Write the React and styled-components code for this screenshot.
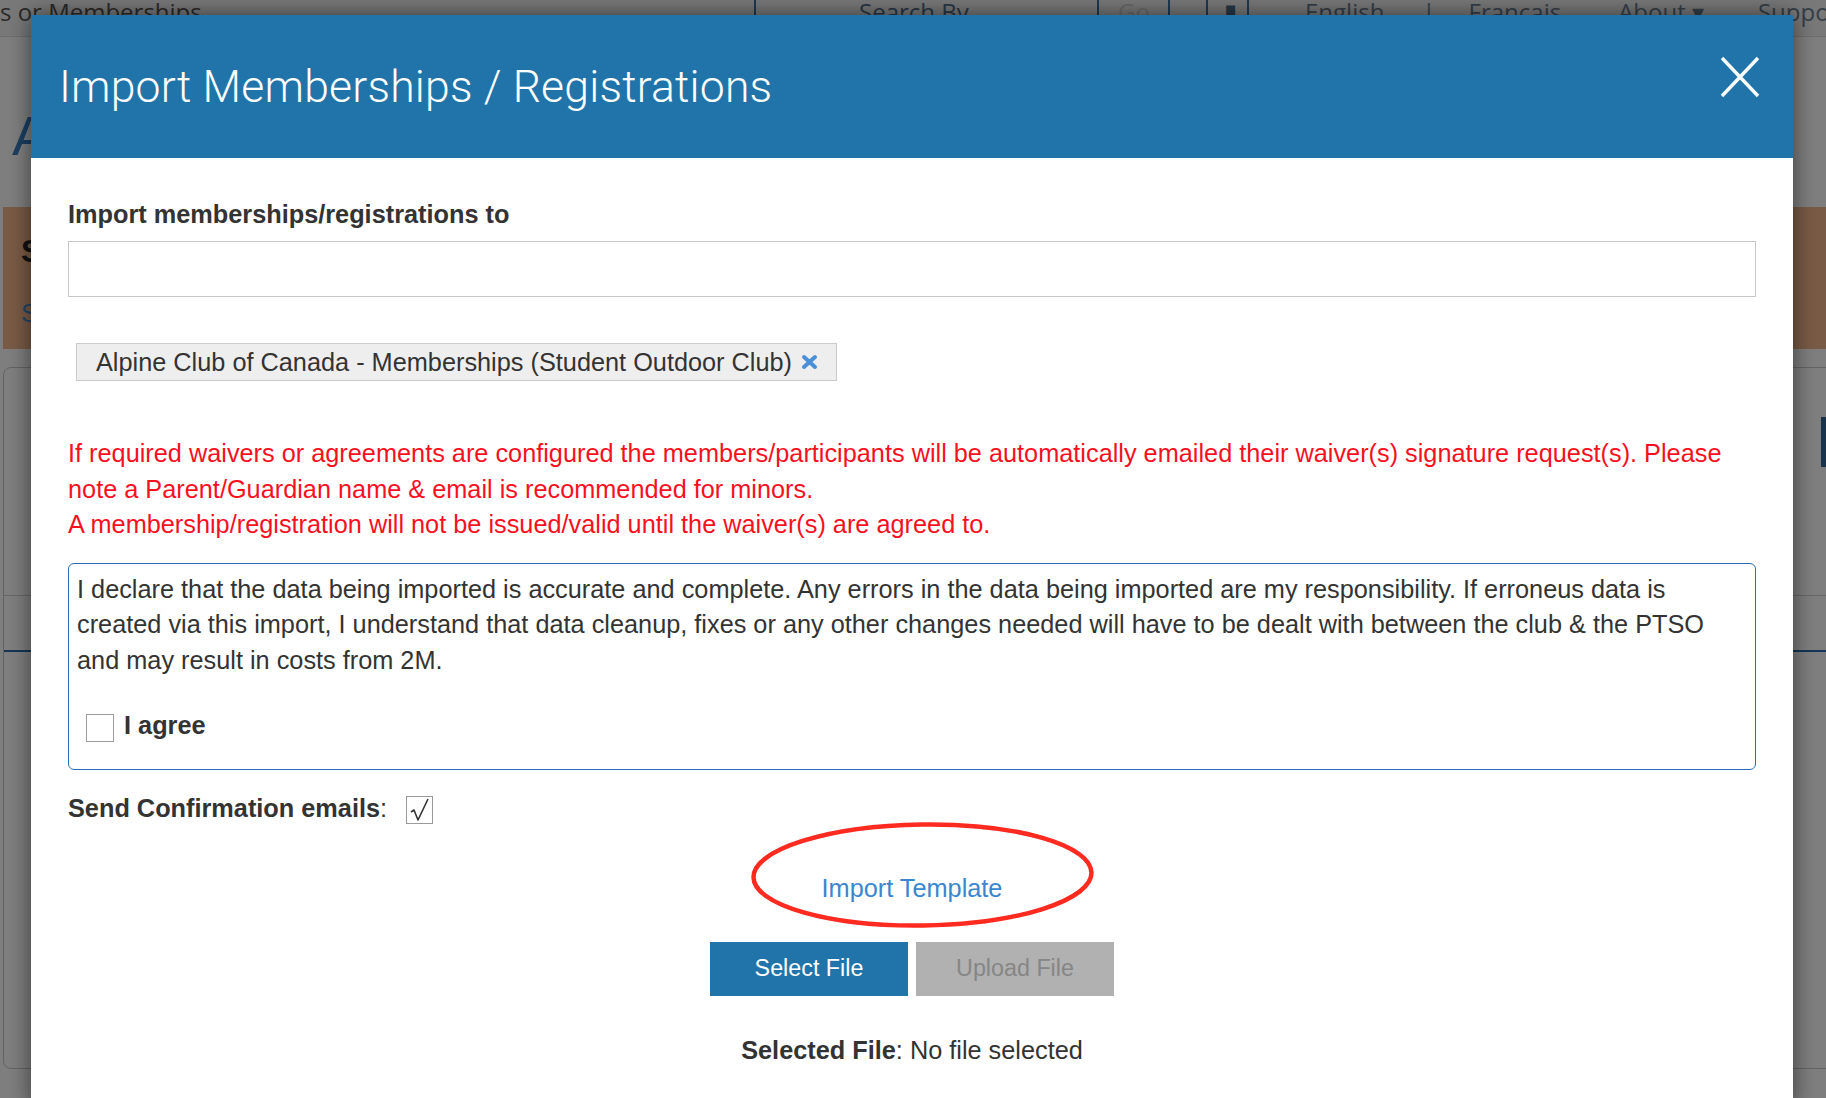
import React from "react";
import styled, { createGlobalStyle } from "styled-components";

const GlobalStyle = createGlobalStyle`
  html, body {
    margin: 0;
    padding: 0;
  }
  body {
    width: 1826px;
    height: 1098px;
    overflow: hidden;
    font-family: "Liberation Sans", Arial, sans-serif;
    background: #fff;
  }
`;

/* ---------- page behind the dialog ---------- */

const Page = styled.div`
  position: relative;
  width: 1826px;
  height: 1098px;
  overflow: hidden;
  background: #fff;
`;

const NavBar = styled.div`
  display: flex;
  align-items: flex-start;
  height: 36px;
  background: #f3f3f3;
  border-bottom: 1px solid #dcdcdc;
  font-family: "Open Sans", sans-serif;
  font-size: 24px;
  line-height: 24px;
  color: #4f6f8f;
  white-space: nowrap;

  & > * {
    flex: none;
  }
`;

const SearchField = styled.div`
  width: 754px;
  color: #555;
`;

const NavCell = styled.div`
  display: flex;
  align-items: flex-start;
  gap: ${(p) => p.$gap || 0}px;
  width: ${(p) => p.$width}px;
  height: 36px;
  box-sizing: border-box;
  margin-left: ${(p) => p.$offset || 0}px;
  padding-left: ${(p) => p.$pad || 0}px;
  border-left: 2px solid #3a74aa;
  border-right: ${(p) => (p.$closed ? "2px solid #3a74aa" : "none")};
  color: ${(p) => p.$color || "#4f6f8f"};
`;

const NavLink = styled.span`
  margin-left: ${(p) => p.$gap}px;
  color: #6b7e90;
`;

const HeadingStrip = styled.div`
  width: 31px;
  overflow: hidden;
`;

const PageHeading = styled.h1`
  margin: 71px 0 0 12px;
  font-size: 56px;
  line-height: 56px;
  font-weight: 400;
  color: #3a7fc0;
`;

const Banner = styled.div`
  margin: 43px 0 0 3px;
  height: 142px;
  box-sizing: border-box;
  padding: 26px 0 0 18px;
  background: #f4b68c;
`;

const BannerText = styled.div`
  width: 12px;
  overflow: hidden;
  font-size: ${(p) => p.$size}px;
  font-weight: ${(p) => (p.$bold ? 700 : 400)};
  margin-top: ${(p) => p.$top || 0}px;
  color: ${(p) => p.$color};
`;

const Card = styled.div`
  margin: 18px 0 0 3px;
  width: 1880px;
  height: 700px;
  border: 1px solid #c9c9c9;
  border-radius: 8px;
  background: #fff;
`;

const CardToolbar = styled.div`
  display: flex;
  justify-content: flex-end;
  padding: 49px 3px 0;
`;

const CardButton = styled.div`
  width: 60px;
  height: 50px;
  background: #34689c;
`;

const CardRule = styled.div`
  margin-top: 128px;
  border-top: 1px solid #cfcfcf;
`;

const CardTabs = styled.div`
  height: 54px;
  border-bottom: 2px solid #2a6db0;
`;

const Backdrop = styled.div`
  position: absolute;
  inset: 0;
  background: rgba(0, 0, 0, 0.5);
`;

/* ---------- import dialog ---------- */

const Modal = styled.div`
  position: absolute;
  top: 15px;
  left: 31px;
  width: 1762px;
  background: #fff;
  box-shadow: 0 0 22px rgba(0, 0, 0, 0.55);
  color: #333;
  font-family: "Liberation Sans", Arial, sans-serif;
`;

const ModalHeader = styled.div`
  display: flex;
  align-items: center;
  justify-content: space-between;
  height: 143px;
  box-sizing: border-box;
  padding: 0 32px 0 28px;
  background: #2074aa;
  color: #fff;
`;

const ModalTitle = styled.h2`
  margin: 0;
  font-family: Roboto, "Liberation Sans", sans-serif;
  font-size: 44.5px;
  font-weight: 300;
  letter-spacing: 0.2px;
`;

const CloseButton = styled.button`
  align-self: flex-start;
  margin-top: 40px;
  width: 42px;
  height: 44px;
  padding: 0;
  border: 0;
  background: none;
  cursor: pointer;
`;

const ModalBody = styled.div`
  padding: 38px 37px 40px;
  font-size: 25.3px;
  line-height: 36px;
`;

const FieldLabel = styled.div`
  font-weight: 700;
`;

const TextInput = styled.input`
  display: block;
  width: 100%;
  height: 56px;
  margin-top: 9px;
  box-sizing: border-box;
  border: 1px solid #c8c8c8;
  font: inherit;
`;

const TagRow = styled.div`
  display: flex;
  margin-top: 46px;
  padding-left: 8px;
`;

const Tag = styled.div`
  display: flex;
  align-items: center;
  gap: 9px;
  height: 38px;
  box-sizing: border-box;
  padding: 0 18px 0 19px;
  border: 1px solid #cbcbcb;
  background: #eeeeee;
`;

const Warning = styled.div`
  margin-top: 55px;
  line-height: 35.5px;
  color: #f7111f;
`;

const DeclarationBox = styled.div`
  margin-top: 20px;
  padding: 8px 8px 26px;
  border: 1px solid #2a6db5;
  border-radius: 6px;
  line-height: 35.7px;
`;

const AgreeRow = styled.label`
  display: flex;
  align-items: center;
  gap: 10px;
  margin-top: 28px;
  padding-left: 9px;
  font-weight: 700;
  line-height: 36px;
`;

const CheckBox = styled.span`
  display: flex;
  align-items: center;
  justify-content: center;
  flex: none;
  width: ${(p) => p.$size || 28}px;
  height: 28px;
  margin-top: ${(p) => p.$drop || 0}px;
  margin-left: ${(p) => p.$left || 0}px;
  box-sizing: border-box;
  border: 1px solid #9a9a9a;
  background: #fff;
`;

const SendRow = styled.div`
  display: flex;
  align-items: center;
  margin-top: 20px;
  font-weight: 700;
`;

const Plain = styled.span`
  font-weight: 400;
`;

const LinkRow = styled.div`
  display: flex;
  justify-content: center;
  margin-top: 44px;
`;

const TemplateLink = styled.a`
  position: relative;
  color: #3a87cf;
  text-decoration: none;
  cursor: pointer;
`;

const Circle = styled.svg`
  position: absolute;
  top: -48px;
  left: calc(50% - 161px);
  pointer-events: none;
`;

const ButtonRow = styled.div`
  display: flex;
  justify-content: center;
  gap: 8px;
  margin-top: 36px;
`;

const ActionButton = styled.button`
  width: 198px;
  height: 54px;
  border: 0;
  padding: 0;
  font-family: inherit;
  font-size: 23.3px;
  color: ${(p) => (p.$disabled ? "#868686" : "#fff")};
  background: ${(p) => (p.$disabled ? "#b1b1b1" : "#2074aa")};
  cursor: ${(p) => (p.$disabled ? "default" : "pointer")};
`;

const SelectedInfo = styled.div`
  margin-top: 36px;
  text-align: center;
`;

const Strong = styled.b`
  font-weight: 700;
`;

const CloseIcon = () => (
  <svg width="42" height="44" viewBox="0 0 42 44">
    <path d="M3 3 L39 41 M39 3 L3 41" stroke="#fff" strokeWidth="3.4" fill="none" />
  </svg>
);

const RemoveIcon = () => (
  <svg width="17" height="16" viewBox="0 0 17 16">
    <path
      d="M3 3 L14 13 M14 3 L3 13"
      stroke="#4a90d9"
      strokeWidth="4"
      strokeLinecap="round"
      fill="none"
    />
  </svg>
);

const Tick = () => (
  <svg width="22" height="24" viewBox="0 0 22 24">
    <path
      d="M2 14 L5 12 L9 22 L19 1"
      stroke="#333"
      strokeWidth="1.6"
      fill="none"
      strokeLinejoin="round"
    />
  </svg>
);

const App = () => {
  return (
    <>
      <GlobalStyle />
      <Page>
        <NavBar>
          <SearchField>s or Memberships</SearchField>
          <NavCell $width={343} $pad={103} $gap={48}>
            <span>Search By</span>
            <span>⌄</span>
          </NavCell>
          <NavCell $width={73} $pad={19} $color="#d4d4d4" $closed>
            Go
          </NavCell>
          <NavCell $width={43} $pad={16} $offset={36} $closed>
            ▮
          </NavCell>
          <NavLink $gap={56}>English</NavLink>
          <NavLink $gap={38}>|</NavLink>
          <NavLink $gap={33}>Français</NavLink>
          <NavLink $gap={57}>About ▾</NavLink>
          <NavLink $gap={54}>Support</NavLink>
        </NavBar>
        <HeadingStrip>
          <PageHeading>A</PageHeading>
        </HeadingStrip>
        <Banner>
          <BannerText $size={32} $bold $color="#222">
            S
          </BannerText>
          <BannerText $size={26} $top={28} $color="#4c8fd0">
            S
          </BannerText>
        </Banner>
        <Card>
          <CardToolbar>
            <CardButton />
          </CardToolbar>
          <CardRule />
          <CardTabs />
        </Card>
        <Backdrop />

        <Modal>
          <ModalHeader>
            <ModalTitle>Import Memberships / Registrations</ModalTitle>
            <CloseButton aria-label="Close">
              <CloseIcon />
            </CloseButton>
          </ModalHeader>

          <ModalBody>
            <FieldLabel>Import memberships/registrations to</FieldLabel>
            <TextInput type="text" />

            <TagRow>
              <Tag>
                Alpine Club of Canada - Memberships (Student Outdoor Club)
                <RemoveIcon />
              </Tag>
            </TagRow>

            <Warning>
              If required waivers or agreements are configured the
              members/participants will be automatically emailed their
              waiver(s) signature request(s). Please note a Parent/Guardian
              name &amp; email is recommended for minors.
              <br />
              A membership/registration will not be issued/valid until the
              waiver(s) are agreed to.
            </Warning>

            <DeclarationBox>
              I declare that the data being imported is accurate and complete.
              Any errors in the data being imported are my responsibility. If
              erroneus data is created via this import, I understand that data
              cleanup, fixes or any other changes needed will have to be dealt
              with between the club &amp; the PTSO and may result in costs from
              2M.
              <AgreeRow>
                <CheckBox $drop={6} />I agree
              </AgreeRow>
            </DeclarationBox>

            <SendRow>
              Send Confirmation emails<Plain>:</Plain>
              <CheckBox $size={27} $left={19} $drop={5}>
                <Tick />
              </CheckBox>
            </SendRow>

            <LinkRow>
              <TemplateLink>
                Import Template
                <Circle width="343" height="108" viewBox="0 0 343 108">
                  <ellipse
                    cx="171.5"
                    cy="53"
                    rx="169"
                    ry="50.5"
                    stroke="#ff2a20"
                    strokeWidth="4.5"
                    fill="none"
                    transform="rotate(-0.8 171.5 53)"
                  />
                </Circle>
              </TemplateLink>
            </LinkRow>

            <ButtonRow>
              <ActionButton>Select File</ActionButton>
              <ActionButton $disabled>Upload File</ActionButton>
            </ButtonRow>

            <SelectedInfo>
              <Strong>Selected File</Strong>: No file selected
            </SelectedInfo>
          </ModalBody>
        </Modal>
      </Page>
    </>
  );
};

export default App;
